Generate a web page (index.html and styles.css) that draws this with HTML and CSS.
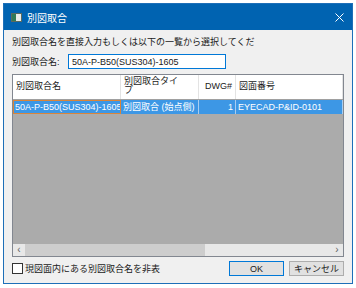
FILE: index.html
```html
<!DOCTYPE html>
<html lang="ja">
<head>
  <meta charset="UTF-8">
  <title>別図取合</title>
  <link rel="stylesheet" href="styles.css">
</head>
<body>
  <div class="window">
    <div class="titlebar">
      <svg class="app-icon" width="11" height="9" viewBox="0 0 11 9">
        <rect x="0.5" y="0.5" width="10" height="8" fill="#e8ece8" stroke="#5a6a60"/>
        <rect x="1" y="1" width="4" height="7" fill="#2f7a55"/>
      </svg>
      <span class="title">別図取合</span>
      <svg class="close" width="9" height="9" viewBox="0 0 9 9">
        <path d="M0.5 0.5 L8.5 8.5 M8.5 0.5 L0.5 8.5" stroke="#fff" stroke-width="1"/>
      </svg>
    </div>

    <div class="client">
      <p class="hint">別図取合名を直接入力もしくは以下の一覧から選択してくだ</p>

      <div class="name-row">
        <label for="name-input">別図取合名:</label>
        <input id="name-input" type="text" value="50A-P-B50(SUS304)-1605">
      </div>

      <!-- 一覧 -->
      <div class="grid">
        <div class="grid-view">
          <div class="grid-row grid-head">
            <div class="cell c1">別図取合名</div>
            <div class="cell c2">別図取合タイ<br>プ</div>
            <div class="cell c3 num">DWG#</div>
            <div class="cell c4">図面番号</div>
          </div>
          <div class="grid-row selected">
            <div class="cell c1 focus">50A-P-B50(SUS304)-1605</div>
            <div class="cell c2">別図取合 (始点側)</div>
            <div class="cell c3 num">1</div>
            <div class="cell c4">EYECAD-P&amp;ID-0101</div>
          </div>
        </div>
        <div class="hscroll">
          <span class="arrow">&lsaquo;</span>
          <div class="track"><div class="thumb"></div></div>
          <span class="arrow">&rsaquo;</span>
        </div>
      </div>

      <div class="footer">
        <label class="check"><span class="box"></span>現図面内にある別図取合名を非表</label>
        <div class="buttons">
          <button class="default">OK</button>
          <button>キャンセル</button>
        </div>
      </div>
    </div>
  </div>
</body>
</html>
```

FILE: styles.css
```css
/* ウィンドウ全体 */
body {
  margin: 0;
  padding: 3px;
  background: #ffffff;
  font-family: "Liberation Sans", "Noto Sans CJK JP", sans-serif;
  font-size: 9px;
  color: #1a1a1a;
}

.window {
  width: 350px;
  height: 281px;
  box-sizing: border-box;
  border: 1px solid #1d6fb8;
  display: flex;
  flex-direction: column;
  background: #f0f0f0;
}

/* タイトルバー */
.titlebar {
  height: 26px;
  background: #0063b1;
  display: flex;
  align-items: center;
  padding: 0 7px 0 7px;
  color: #ffffff;
}

.app-icon {
  margin-right: 5px;
}

.title {
  flex-grow: 1;
  font-size: 10px;
}

.close {
  margin-right: 1px;
}

/* 本体 */
.client {
  flex-grow: 1;
  display: flex;
  flex-direction: column;
  padding: 4px 8px 0 8px;
}

.hint {
  margin: 0;
  height: 16px;
  line-height: 16px;
}

.name-row {
  display: flex;
  align-items: center;
  margin-top: 4px;
  height: 15px;
}

.name-row label {
  width: 56px;
}

.name-row input {
  width: 158px;
  height: 15px;
  box-sizing: border-box;
  border: 1px solid #0078d7;
  padding: 0 3px;
  font: inherit;
  color: #1a1a1a;
  outline: none;
}

/* 一覧グリッド */
.grid {
  margin-top: 5px;
  height: 181px;
  border: 1px solid #828790;
  display: flex;
  flex-direction: column;
}

.grid-view {
  flex-grow: 1;
  background: #ababab;
}

.grid-row {
  display: flex;
}

.grid-head {
  height: 24px;
  background: #ffffff;
  border-bottom: 1px solid #a0a0a0;
}

.grid-head .cell {
  border-right: 1px solid #e3e3e3;
  padding: 2px 3px;
  line-height: 9px;
}

.grid-head .c1 {
  padding-top: 7px;
}

.grid-head .c3,
.grid-head .c4 {
  padding-top: 7px;
}

.cell {
  box-sizing: border-box;
  overflow: hidden;
  white-space: nowrap;
}

.c1 { width: 108px; }
.c2 { width: 78px; }
.c3 { width: 37px; }
.c4 { flex-grow: 1; }

.num {
  text-align: right;
}

.selected {
  height: 14px;
  background: #3d97e5;
  color: #ffffff;
}

.selected .cell {
  line-height: 12px;
  padding: 1px 2px;
  border-right: 1px solid #a8cdf0;
}

.selected .focus {
  border: 1px solid #d9853a;
  padding: 0 1px;
}

/* 横スクロールバー */
.hscroll {
  height: 12px;
  display: flex;
  align-items: center;
  background: #e8e8e8;
  border-top: 1px solid #ababab;
}

.arrow {
  width: 12px;
  text-align: center;
  font-size: 10px;
  color: #606060;
  line-height: 12px;
}

.track {
  flex-grow: 1;
  height: 12px;
}

.thumb {
  width: 180px;
  height: 12px;
  background: #cdcdcd;
}

/* 下部 */
.footer {
  display: flex;
  align-items: center;
  margin-top: 4px;
}

.check {
  flex-grow: 1;
  display: flex;
  align-items: center;
}

.box {
  width: 9px;
  height: 9px;
  border: 1px solid #333333;
  background: #ffffff;
  margin-right: 2px;
}

.buttons {
  display: flex;
}

button {
  font: inherit;
  height: 15px;
  width: 55px;
  margin-left: 5px;
  background: #e1e1e1;
  border: 1px solid #adadad;
  color: #1a1a1a;
  padding: 0;
}

button.default {
  border-color: #0078d7;
}
```
